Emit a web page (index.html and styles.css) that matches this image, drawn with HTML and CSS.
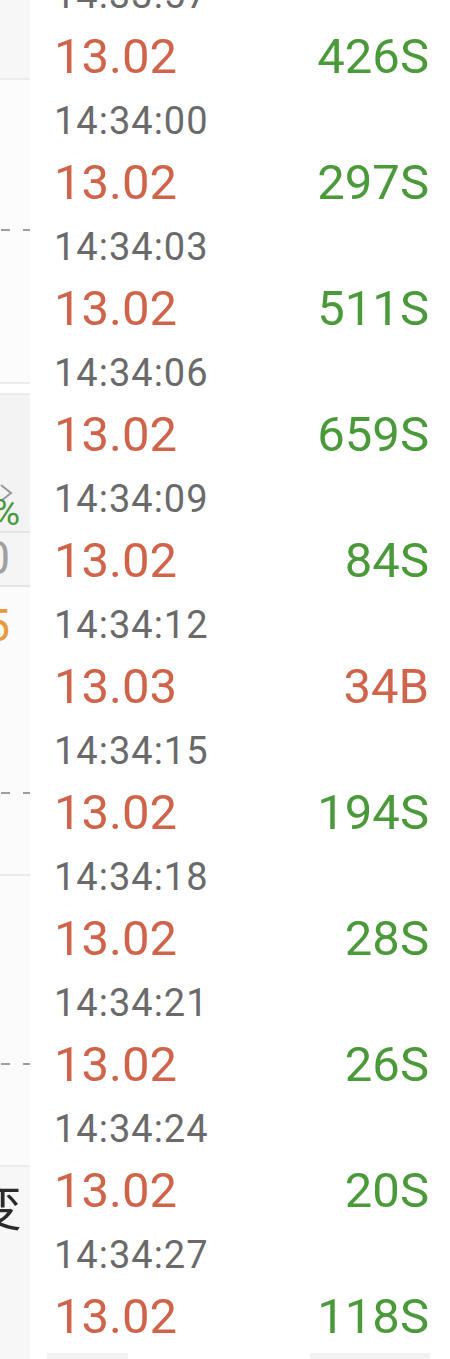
FILE: index.html
```html
<!DOCTYPE html>
<html lang="zh-CN">
<head>
    <meta charset="UTF-8">
    <meta name="viewport" content="width=device-width, initial-scale=1.0">
    <title>分时成交</title>
    <link rel="stylesheet" href="styles.css">
</head>
<body>
    <div class="screen">
        <aside class="chart-edge">
            <div class="block top"></div>
            <div class="block chart-a"><span class="dash"></span></div>
            <div class="gap"></div>
            <div class="block quote">
                <svg class="chev" width="16" height="20" viewBox="0 0 16 20">
                    <path d="M3 2 L13 10 L3 18" fill="none" stroke="#9a9a9a" stroke-width="2"/>
                </svg>
                <span class="pct">0.23%</span>
            </div>
            <div class="block vol"><span class="num">1000</span></div>
            <div class="block chart-b">
                <span class="orange">13.05</span>
                <span class="dash dash-b"></span>
            </div>
            <div class="block chart-c"><span class="dash dash-c"></span></div>
            <div class="block tabs"><span class="cjk">变</span></div>
        </aside>
        <main class="ticks">
            <ul id="tick-list" class="tick-list"></ul>
            <div class="fade">
                <span class="stub left"></span>
                <span class="stub right"></span>
            </div>
        </main>
    </div>
    <script>
        // tick-by-tick trades
        const ticks = [
            ['14:33:57', '13.02', '426', 'S'],
            ['14:34:00', '13.02', '297', 'S'],
            ['14:34:03', '13.02', '511', 'S'],
            ['14:34:06', '13.02', '659', 'S'],
            ['14:34:09', '13.02', '84', 'S'],
            ['14:34:12', '13.03', '34', 'B'],
            ['14:34:15', '13.02', '194', 'S'],
            ['14:34:18', '13.02', '28', 'S'],
            ['14:34:21', '13.02', '26', 'S'],
            ['14:34:24', '13.02', '20', 'S'],
            ['14:34:27', '13.02', '118', 'S']
        ];

        const list = document.getElementById('tick-list');
        ticks.forEach(([time, price, vol, side]) => {
            const li = document.createElement('li');
            li.className = 'tick';
            li.innerHTML = `
                <div class="tick-time">${time}</div>
                <div class="tick-row">
                    <span class="tick-price">${price}</span>
                    <span class="tick-vol ${side === 'B' ? 'buy' : 'sell'}">${vol}${side}</span>
                </div>
            `;
            list.appendChild(li);
        });
    </script>
</body>
</html>
```

FILE: styles.css
```css
body {
    margin: 0;
    padding: 0;
    background-color: #fff;
    font-family: Roboto, "Noto Sans CJK SC", sans-serif;
}
.screen {
    display: flex;
    width: 450px;
    height: 1359px;
    overflow: hidden;
}

/* cut-off chart on the left */
.chart-edge {
    width: 30px;
    flex: none;
    display: flex;
    flex-direction: column;
    overflow: hidden;
}
.block {
    position: relative;
    display: flex;
    justify-content: flex-end;
    overflow: hidden;
    border-bottom: 2px solid #ebebeb;
}
.top {
    height: 78px;
    background-color: #f7f7f7;
}
.chart-a {
    height: 302px;
    background-color: #fcfcfc;
}
.gap {
    height: 9px;
    border-bottom: 2px solid #ececec;
}
.dash {
    position: absolute;
    left: 1px;
    top: 149px;
    width: 29px;
    height: 2px;
    background: linear-gradient(to right, #9e9e9e 0 9px, transparent 9px 22px, #9e9e9e 22px);
}
.quote {
    height: 136px;
    background-color: #f3f3f3;
    flex-direction: column;
    align-items: flex-end;
    border-bottom-color: #e4e4e4;
}
.chev {
    margin-top: 90px;
    margin-right: 16px;
    flex: none;
}
.pct {
    margin-top: -8px;
    margin-right: 10px;
    font-size: 37px;
    line-height: 36px;
    color: #4c9a3c;
    white-space: nowrap;
}
.vol {
    height: 52px;
    background-color: #f5f5f5;
    border-bottom-color: #e4e4e4;
}
.num {
    margin-top: 0;
    margin-right: 20px;
    font-size: 46px;
    line-height: 50px;
    color: #a0a0a0;
}
.chart-b {
    height: 287px;
    background-color: #fbfbfb;
    align-items: flex-start;
}
.orange {
    margin-top: 14px;
    margin-right: 20px;
    font-size: 44px;
    line-height: 50px;
    color: #e99a3e;
    white-space: nowrap;
}
.dash-b {
    top: 205px;
}
.chart-c {
    height: 289px;
    background-color: #fbfbfb;
}
.dash-c {
    top: 187px;
}
.tabs {
    flex: 1;
    background-color: #f7f7f7;
    border-bottom: none;
}
.cjk {
    margin-top: 12px;
    margin-right: 8px;
    font-size: 50px;
    line-height: 60px;
    color: #2a2a2a;
}

/* trade list */
.ticks {
    flex: 1;
    position: relative;
    overflow: hidden;
}
.tick-list {
    list-style: none;
    margin: -38px 0 0 0;
    padding: 0 21px 0 24px;
}
.tick-time {
    height: 63px;
    line-height: 66px;
    font-size: 38px;
    letter-spacing: 1px;
    color: #6a6a6a;
}
.tick-row {
    display: flex;
    justify-content: space-between;
    height: 63px;
    line-height: 63px;
    font-size: 49px;
}
.tick-price {
    color: #d0644a;
}
.sell {
    color: #4a9a3a;
}
.buy {
    color: #d0644a;
}
.fade {
    position: absolute;
    left: 0;
    right: 0;
    bottom: 0;
    height: 6px;
    display: flex;
    justify-content: space-between;
    padding: 0 20px 0 17px;
    background-color: #fff;
}
.stub {
    background-color: #f2f2f2;
}
.stub.left {
    width: 81px;
}
.stub.right {
    width: 120px;
}
```
